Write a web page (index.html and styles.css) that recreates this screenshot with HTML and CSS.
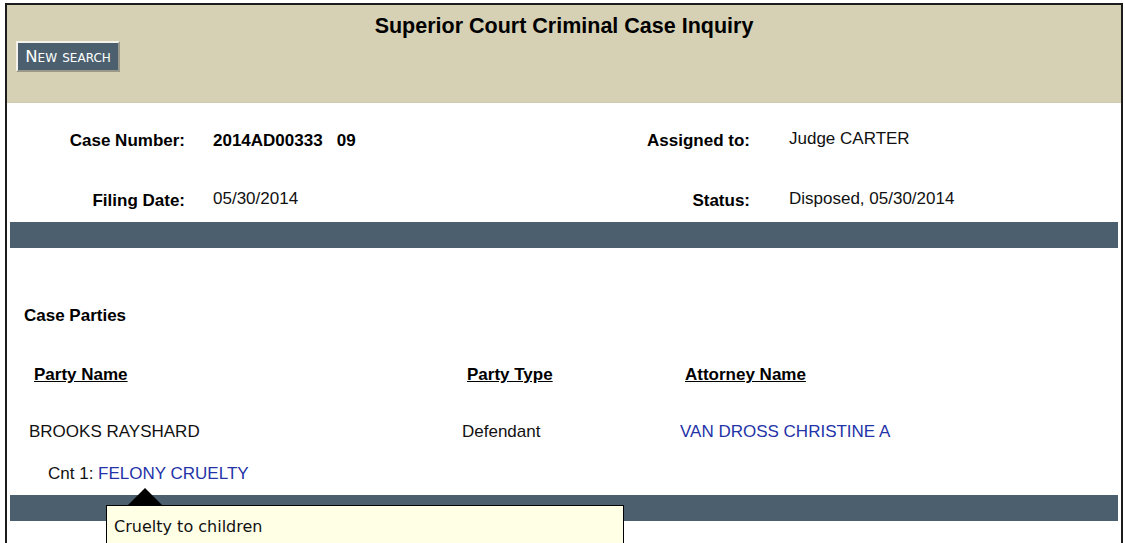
FILE: index.html
```html
<!DOCTYPE html>
<html lang="en">
<head>
<meta charset="utf-8">
<title>Superior Court Criminal Case Inquiry</title>
<link rel="stylesheet" href="styles.css">
</head>
<body>
<div class="page">
  <div class="header">
    <h1 class="title">Superior Court Criminal Case Inquiry</h1>
    <button class="new-search" type="button">New search</button>
  </div>

  <div class="info">
    <div class="label">Case Number:</div>
    <div class="value strong">2014AD00333&nbsp;&nbsp;&nbsp;09</div>
    <div class="label">Assigned to:</div>
    <div class="value right-value">Judge CARTER</div>

    <div class="label">Filing Date:</div>
    <div class="value">05/30/2014</div>
    <div class="label">Status:</div>
    <div class="value right-value">Disposed, 05/30/2014</div>
  </div>

  <div class="bar"></div>

  <div class="parties">
    <h2 class="section-title">Case Parties</h2>
    <div class="party-grid">
      <div class="col-head">Party Name</div>
      <div class="col-head">Party Type</div>
      <div class="col-head">Attorney Name</div>

      <div class="cell">BROOKS RAYSHARD</div>
      <div class="cell">Defendant</div>
      <div class="cell"><a class="link" href="#">VAN DROSS CHRISTINE A</a></div>
    </div>
    <div class="count">Cnt 1: <span class="tip-anchor"><a class="link" href="#">FELONY CRUELTY</a><span class="tooltip"><span class="tooltip-arrow"></span>Cruelty to children</span></span></div>
  </div>

  <div class="bar"></div>
</div>
</body>
</html>
```
FILE: styles.css
```css
html, body {
  margin: 0;
  padding: 0;
  overflow: hidden;
  background: #ffffff;
}

body {
  font-family: "Liberation Sans", Arial, Helvetica, sans-serif;
  font-size: 17px;
  color: #111111;
}

.page {
  margin: 3px 0 0 5px;
  width: 1114px;
  min-height: 600px;
  border: 2px solid #1c1c1c;
  border-bottom: none;
  background: #ffffff;
}

.header {
  background: #d6d1b4;
  height: 98px;
  padding-top: 8px;
  box-sizing: border-box;
  border-bottom: 1px solid #cfcab0;
}

.title {
  margin: 0;
  font-size: 21.5px;
  line-height: 26px;
  font-weight: bold;
  text-align: center;
  color: #000000;
}

.new-search {
  display: block;
  margin: 2px 0 0 9px;
  width: 104px;
  height: 31px;
  padding: 0;
  background: #4b5f6e;
  color: #ffffff;
  font-family: "DejaVu Sans", Verdana, sans-serif;
  font-size: 16.5px;
  font-variant: small-caps;
  line-height: 27px;
  text-align: center;
  border: 2px solid;
  border-color: #f4f2ea #9a9888 #9a9888 #f4f2ea;
  cursor: pointer;
}

.info {
  display: grid;
  grid-template-columns: 178px 415px 150px auto;
  row-gap: 38px;
  padding-top: 26px;
  padding-bottom: 11px;
  line-height: 20px;
}

.label {
  font-weight: bold;
  text-align: right;
  padding-top: 2px;
  color: #000000;
}

.value {
  padding-left: 28px;
}

.value.strong {
  font-weight: bold;
  padding-top: 2px;
  color: #000000;
}

.right-value {
  padding-left: 39px;
}

.bar {
  height: 26px;
  margin: 0 3px;
  background: #4b5f6e;
}

.parties {
  padding: 58px 0 11px 0;
  line-height: 20px;
}

.section-title {
  margin: 0 0 39px 17px;
  font-size: 17px;
  line-height: 20px;
  font-weight: bold;
  color: #000000;
}

.party-grid {
  display: grid;
  grid-template-columns: 433px 218px auto;
  row-gap: 37px;
  padding-left: 22px;
}

.col-head {
  font-weight: bold;
  text-decoration: underline;
  padding-left: 5px;
  color: #000000;
}

.link {
  color: #2433a8;
  text-decoration: none;
}

.count {
  margin-top: 22px;
  padding-left: 41px;
}

.tip-anchor {
  position: relative;
}

.tooltip {
  position: absolute;
  left: 8px;
  top: 41px;
  width: 518px;
  height: 60px;
  box-sizing: border-box;
  padding: 10px 0 0 7px;
  background: #ffffe6;
  border: 1px solid #000000;
  font-family: "DejaVu Sans", Verdana, sans-serif;
  font-size: 16px;
  line-height: 22px;
  color: #111111;
  white-space: nowrap;
  z-index: 2;
}

.tooltip-arrow {
  position: absolute;
  left: 21px;
  top: -18px;
  width: 0;
  height: 0;
  border-left: 17px solid transparent;
  border-right: 17px solid transparent;
  border-bottom: 17px solid #000000;
}
```
